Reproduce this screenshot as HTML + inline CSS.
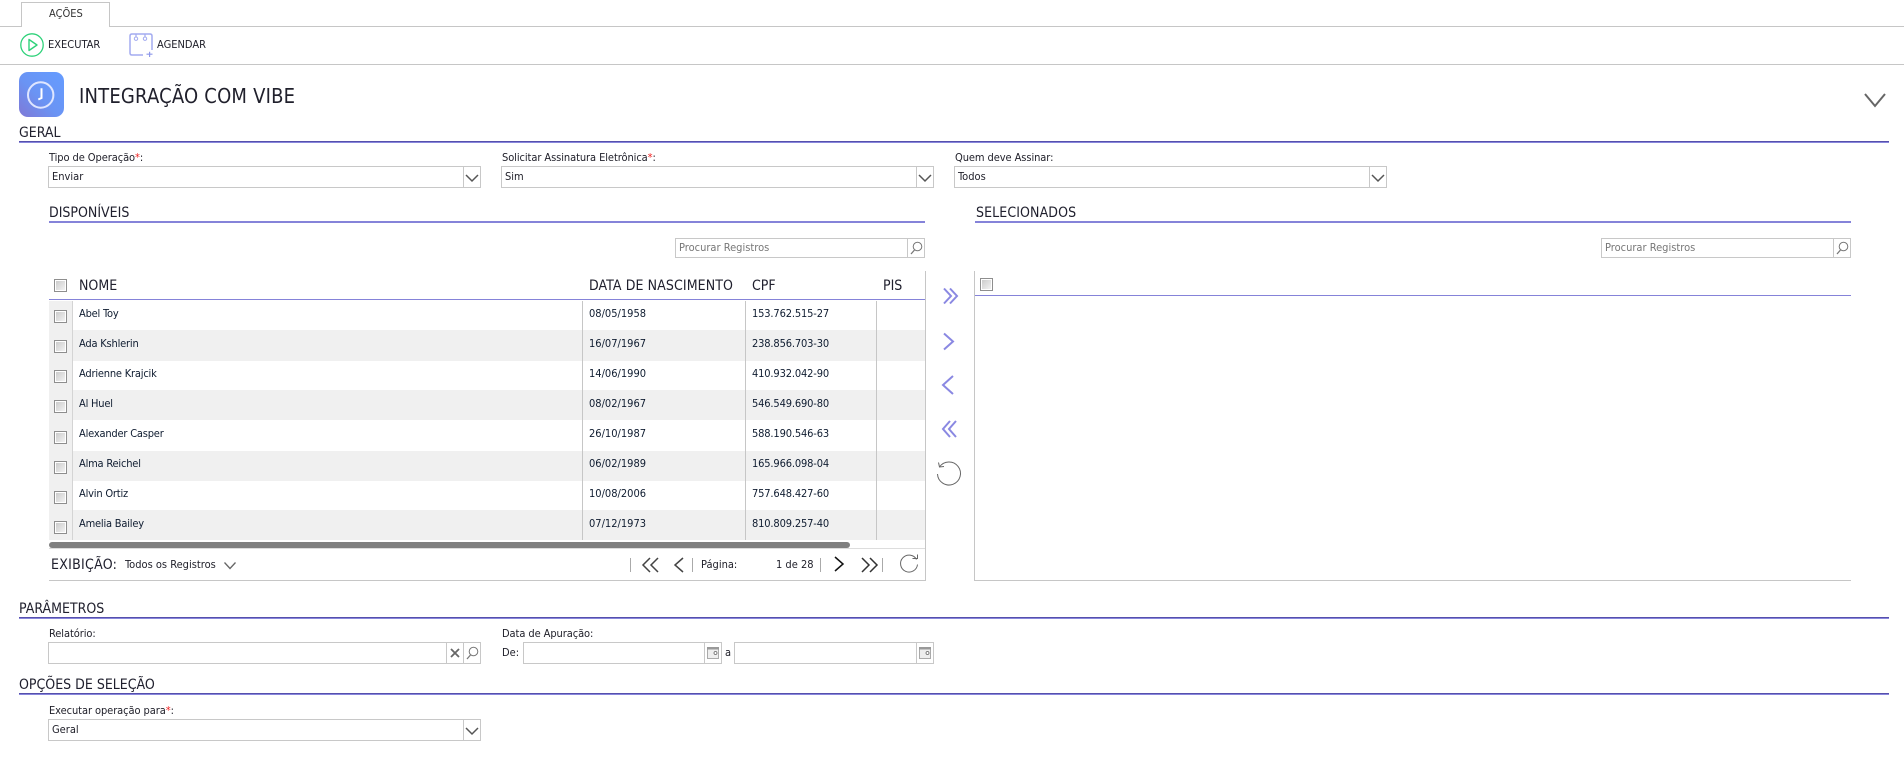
<!DOCTYPE html>
<html lang="pt-BR">
<head>
<meta charset="utf-8">
<title>Integração com Vibe</title>
<style>
html,body{margin:0;padding:0;background:#fff;width:1904px;height:759px;overflow:hidden}
body{position:relative;font-family:"DejaVu Sans Condensed","DejaVu Sans","Liberation Sans",sans-serif;font-stretch:condensed;font-size:11px;color:#1e1e28}
.t{position:absolute;white-space:nowrap;line-height:16px;height:16px}
.h{font-size:14px;color:#20202e}
.d{color:#0f1c30}
.n{letter-spacing:-.2px}
.c{letter-spacing:-.15px}
.l{letter-spacing:-.08px}
.r{color:#f02020}
.a{position:absolute}
.hl{position:absolute;height:2px;background:linear-gradient(#5650ac 50%,#8886dc 50%)}
.hl2{position:absolute;height:2px;background:#8583d9}
.hl1{position:absolute;height:1px;background:#8583d9}
.g{position:absolute;background:#c6c6c6}
.box{position:absolute;box-sizing:border-box;border:1px solid #c8c8c8;background:#fff}
.sep{position:absolute;top:0;bottom:0;width:1px;background:#c8c8c8}
.cb{position:absolute;box-sizing:border-box;width:13px;height:13px;border:1px solid #8e8e8e;background:linear-gradient(135deg,#c8c8c8,#f6f6f6);box-shadow:inset 0 0 0 1px #fff}
.row{position:absolute;left:49px;width:876px;height:29px}
.alt{background:#f0f0f0}
svg{position:absolute;overflow:visible}
</style>
</head>
<body>
<!-- Tabs -->
<div class="g" style="left:0;top:26px;width:1904px;height:1px"></div>
<div class="a" style="left:21px;top:2px;width:89px;height:25px;box-sizing:border-box;border:1px solid #c6c6c6;border-bottom:0;background:#fff"></div>
<div class="t" style="left:49px;top:6px;color:#333">AÇÕES</div>

<!-- Toolbar -->
<svg style="left:20px;top:33px" width="24" height="24" fill="none"><circle cx="12" cy="12" r="11.2" stroke="#2fd27a" stroke-width="1.3"/><path d="M9 6.5 L17 12 L9 17.5 Z" stroke="#2fd27a" stroke-width="1.4" stroke-linejoin="round"/></svg>
<div class="t" style="left:48px;top:37px">EXECUTAR</div>
<svg style="left:129px;top:33px" width="24" height="24" fill="none"><path d="M14 22H3Q1 22 1 20V3Q1 1 3 1H21Q23 1 23 3V17" stroke="#a3abf0" stroke-width="1.500"/><circle cx="7" cy="5.700" r="1.700" stroke="#a3abf0"/><circle cx="16" cy="5.700" r="1.700" stroke="#a3abf0"/><path d="M7 1V4M16 1V4" stroke="#a3abf0" stroke-width="1.200"/><path d="M17.500 21.200H23.500M20.600 18.700V24" stroke="#8f98ea" stroke-width="1.200"/></svg>
<div class="t" style="left:157px;top:37px">AGENDAR</div>
<div class="g" style="left:0;top:64px;width:1904px;height:1px"></div>

<!-- Page title -->
<div class="a" style="left:19px;top:72px;width:45px;height:45px;border-radius:9px;background:linear-gradient(45deg,#7f78d6 0%,#6a94f4 45%,#659cff 100%)"></div>
<svg style="left:19px;top:72px" width="45" height="45" fill="none"><circle cx="21.700" cy="23" r="12.700" stroke="#dfe6ff" stroke-width="2"/><path d="M22.500 16.300V26L19.300 27.500" stroke="#fff" stroke-width="2"/></svg>
<div class="t" style="left:79px;top:84px;font-size:20px;line-height:24px;height:24px;color:#20202c;letter-spacing:.2px">INTEGRAÇÃO COM VIBE</div>
<svg style="left:1864px;top:93px" width="22" height="15" fill="none"><path d="M1 1L11 13L21 1" stroke="#666" stroke-width="2"/></svg>

<!-- Geral -->
<div class="t h" style="left:19px;top:125px">GERAL</div>
<div class="hl" style="left:19px;top:141px;width:1870px"></div>

<div class="t l" style="left:49px;top:150px">Tipo de Operação<span class="r">*</span>:</div>
<div class="box" style="left:48px;top:166px;width:433px;height:22px"><div class="sep" style="right:16px"></div></div>
<svg style="left:465px;top:174px" width="14" height="8" fill="none"><path d="M1 1L7 7L13 1" stroke="#555" stroke-width="1.500"/></svg>
<div class="t" style="left:52px;top:169px">Enviar</div>

<div class="t l" style="left:502px;top:150px">Solicitar Assinatura Eletrônica<span class="r">*</span>:</div>
<div class="box" style="left:501px;top:166px;width:433px;height:22px"><div class="sep" style="right:16px"></div></div>
<svg style="left:918px;top:174px" width="14" height="8" fill="none"><path d="M1 1L7 7L13 1" stroke="#555" stroke-width="1.500"/></svg>
<div class="t" style="left:505px;top:169px">Sim</div>

<div class="t l" style="left:955px;top:150px">Quem deve Assinar:</div>
<div class="box" style="left:954px;top:166px;width:433px;height:22px"><div class="sep" style="right:16px"></div></div>
<svg style="left:1371px;top:174px" width="14" height="8" fill="none"><path d="M1 1L7 7L13 1" stroke="#555" stroke-width="1.500"/></svg>
<div class="t" style="left:958px;top:169px">Todos</div>

<!-- Disponíveis -->
<div class="t h" style="left:49px;top:205px">DISPONÍVEIS</div>
<div class="hl2" style="left:49px;top:221px;width:876px"></div>
<div class="t h" style="left:976px;top:205px;letter-spacing:.1px">SELECIONADOS</div>
<div class="hl2" style="left:975px;top:221px;width:876px"></div>

<!-- Search -->
<div class="box" style="left:675px;top:238px;width:250px;height:20px"><div class="sep" style="right:16px"></div></div>
<div class="t" style="left:679px;top:240px;color:#777">Procurar Registros</div>
<svg style="left:910px;top:241px" width="13" height="14" fill="none"><circle cx="7.500" cy="5.500" r="4.300" stroke="#777" stroke-width="1"/><path d="M4.500 9L1 13" stroke="#777" stroke-width="1.300"/></svg>
<div class="box" style="left:1601px;top:238px;width:250px;height:20px"><div class="sep" style="right:16px"></div></div>
<div class="t" style="left:1605px;top:240px;color:#777">Procurar Registros</div>
<svg style="left:1836px;top:241px" width="13" height="14" fill="none"><circle cx="7.500" cy="5.500" r="4.300" stroke="#777" stroke-width="1"/><path d="M4.500 9L1 13" stroke="#777" stroke-width="1.300"/></svg>

<!-- Table header -->
<div class="cb" style="left:54px;top:279px"></div>
<div class="t h" style="left:79px;top:278px">NOME</div>
<div class="t h" style="left:589px;top:278px;letter-spacing:.1px">DATA DE NASCIMENTO</div>
<div class="t h" style="left:752px;top:278px">CPF</div>
<div class="t h" style="left:883px;top:278px">PIS</div>
<div class="hl1" style="left:49px;top:299px;width:876px"></div>

<!-- Rows -->
<div class="row" style="top:301px"></div>
<div class="row alt" style="top:330px;height:31px"></div>
<div class="row" style="top:361px"></div>
<div class="row alt" style="top:390px;height:30px"></div>
<div class="row" style="top:420px;height:30px"></div>
<div class="row alt" style="top:451px;height:30px"></div>
<div class="row" style="top:481px"></div>
<div class="row alt" style="top:510px;height:30px"></div>
<div class="a" style="left:49px;top:301px;width:23px;height:239px;background:#f0f0f0"></div>
<div class="g" style="left:72px;top:301px;width:1px;height:239px;background:#d4d4d4"></div>
<div class="g" style="left:582px;top:301px;width:1px;height:239px"></div>
<div class="g" style="left:745px;top:301px;width:1px;height:239px"></div>
<div class="g" style="left:876px;top:301px;width:1px;height:239px"></div>

<div class="cb" style="left:54px;top:310px"></div>
<div class="cb" style="left:54px;top:340px"></div>
<div class="cb" style="left:54px;top:370px"></div>
<div class="cb" style="left:54px;top:400px"></div>
<div class="cb" style="left:54px;top:431px"></div>
<div class="cb" style="left:54px;top:461px"></div>
<div class="cb" style="left:54px;top:491px"></div>
<div class="cb" style="left:54px;top:521px"></div>

<div class="t d n" style="left:79px;top:306px">Abel Toy</div><div class="t d" style="left:589px;top:306px">08/05/1958</div><div class="t d c" style="left:752px;top:306px">153.762.515-27</div>
<div class="t d n" style="left:79px;top:336px">Ada Kshlerin</div><div class="t d" style="left:589px;top:336px">16/07/1967</div><div class="t d c" style="left:752px;top:336px">238.856.703-30</div>
<div class="t d n" style="left:79px;top:366px">Adrienne Krajcik</div><div class="t d" style="left:589px;top:366px">14/06/1990</div><div class="t d c" style="left:752px;top:366px">410.932.042-90</div>
<div class="t d n" style="left:79px;top:396px">Al Huel</div><div class="t d" style="left:589px;top:396px">08/02/1967</div><div class="t d c" style="left:752px;top:396px">546.549.690-80</div>
<div class="t d n" style="left:79px;top:426px">Alexander Casper</div><div class="t d" style="left:589px;top:426px">26/10/1987</div><div class="t d c" style="left:752px;top:426px">588.190.546-63</div>
<div class="t d n" style="left:79px;top:456px">Alma Reichel</div><div class="t d" style="left:589px;top:456px">06/02/1989</div><div class="t d c" style="left:752px;top:456px">165.966.098-04</div>
<div class="t d n" style="left:79px;top:486px">Alvin Ortiz</div><div class="t d" style="left:589px;top:486px">10/08/2006</div><div class="t d c" style="left:752px;top:486px">757.648.427-60</div>
<div class="t d n" style="left:79px;top:516px">Amelia Bailey</div><div class="t d" style="left:589px;top:516px">07/12/1973</div><div class="t d c" style="left:752px;top:516px">810.809.257-40</div>

<!-- Scrollbar -->
<div class="a" style="left:49px;top:542px;width:801px;height:6px;background:#808080;border-radius:3px"></div>
<div class="g" style="left:49px;top:548px;width:876px;height:1px;background:#ddd"></div>

<!-- Table borders -->
<div class="g" style="left:925px;top:271px;width:1px;height:310px"></div>
<div class="g" style="left:974px;top:271px;width:1px;height:310px"></div>
<div class="g" style="left:49px;top:580px;width:877px;height:1px"></div>
<div class="g" style="left:974px;top:580px;width:877px;height:1px"></div>

<!-- Footer -->
<div class="t h" style="left:51px;top:557px;letter-spacing:.27px">EXIBIÇÃO:</div>
<div class="t" style="left:125px;top:557px">Todos os Registros</div>
<svg style="left:224px;top:562px" width="12" height="8" fill="none"><path d="M0.500 0.500L6 6.500L11.500 0.500" stroke="#666" stroke-width="1.300"/></svg>
<div class="g" style="left:630px;top:558px;width:1px;height:14px;background:#aaa"></div>
<svg style="left:642px;top:557px" width="17" height="16" fill="none" stroke="#444" stroke-width="1.500"><path d="M8 1L1 8L8 15M16 1L9 8L16 15"/></svg>
<svg style="left:674px;top:557px" width="10" height="16" fill="none" stroke="#444" stroke-width="1.500"><path d="M9 1L1 8L9 15"/></svg>
<div class="g" style="left:692px;top:558px;width:1px;height:14px;background:#aaa"></div>
<div class="t" style="left:701px;top:557px">Página:</div>
<div class="t" style="left:776px;top:557px">1 de 28</div>
<div class="g" style="left:820px;top:558px;width:1px;height:14px;background:#aaa"></div>
<svg style="left:834px;top:556px" width="10" height="16" fill="none" stroke="#111" stroke-width="1.500"><path d="M1 1L9 8L1 15"/></svg>
<svg style="left:861px;top:557px" width="17" height="16" fill="none" stroke="#333" stroke-width="1.500"><path d="M1 1L8 8L1 15M9 1L16 8L9 15"/></svg>
<div class="g" style="left:882px;top:558px;width:1px;height:14px;background:#aaa"></div>
<svg style="left:899px;top:554px" width="20" height="20" fill="none" stroke="#666" stroke-width="1"><path d="M17.500 5.500A8.500 8.500 0 1 0 18.500 10.500"/><path d="M13.500 4.500H18.500V0.500"/></svg>

<!-- Transfer buttons -->
<svg style="left:942px;top:287px" width="17" height="18" fill="none" stroke="#8a88e2" stroke-width="2"><path d="M2 1.500L9 9L2 16.500M8 1.500L15 9L8 16.500"/></svg>
<svg style="left:942px;top:332px" width="14" height="19" fill="none" stroke="#8a88e2" stroke-width="2"><path d="M2 1.500L11 9.500L2 17.500"/></svg>
<svg style="left:941px;top:375px" width="14" height="20" fill="none" stroke="#8a88e2" stroke-width="2"><path d="M12 1L2 10L12 19"/></svg>
<svg style="left:941px;top:420px" width="17" height="18" fill="none" stroke="#8a88e2" stroke-width="2"><path d="M9 1L2 9L9 17M15 1L8 9L15 17"/></svg>
<svg style="left:936px;top:461px" width="26" height="26" fill="none" stroke="#666" stroke-width="1"><path d="M3.500 6A11.500 11.500 0 1 1 1.500 13"/><path d="M8 5.500L3.500 6L2.500 1.500"/></svg>

<!-- Selected panel header -->
<div class="cb" style="left:980px;top:278px"></div>
<div class="hl1" style="left:975px;top:295px;width:876px"></div>

<!-- Parâmetros -->
<div class="t h" style="left:19px;top:601px">PARÂMETROS</div>
<div class="hl" style="left:19px;top:617px;width:1870px"></div>
<div class="t l" style="left:49px;top:626px">Relatório:</div>
<div class="box" style="left:48px;top:642px;width:433px;height:22px"><div class="sep" style="right:16px"></div><div class="sep" style="right:33px"></div></div>
<svg style="left:450px;top:648px" width="10" height="10" fill="none" stroke="#666" stroke-width="1.800"><path d="M1 1L9 9M9 1L1 9"/></svg>
<svg style="left:466px;top:646px" width="13" height="14" fill="none"><circle cx="7.500" cy="5.500" r="4.300" stroke="#777" stroke-width="1"/><path d="M4.500 9L1 13" stroke="#777" stroke-width="1.300"/></svg>

<div class="t l" style="left:502px;top:626px">Data de Apuração:</div>
<div class="t" style="left:502px;top:645px">De:</div>
<div class="box" style="left:523px;top:642px;width:199px;height:22px"><div class="sep" style="right:16px"></div></div>
<svg style="left:707px;top:647px" width="12" height="12"><rect x="0.500" y="0.500" width="11" height="11" fill="#eee" stroke="#aaa"/><rect x="0" y="0" width="12" height="2.500" fill="#999"/><circle cx="8.500" cy="6" r="1.500" fill="#fff" stroke="#666" stroke-width="0.800"/></svg>
<div class="t" style="left:725px;top:645px">a</div>
<div class="box" style="left:734px;top:642px;width:200px;height:22px"><div class="sep" style="right:16px"></div></div>
<svg style="left:919px;top:647px" width="12" height="12"><rect x="0.500" y="0.500" width="11" height="11" fill="#eee" stroke="#aaa"/><rect x="0" y="0" width="12" height="2.500" fill="#999"/><circle cx="8.500" cy="6" r="1.500" fill="#fff" stroke="#666" stroke-width="0.800"/></svg>

<!-- Opções de seleção -->
<div class="t h" style="left:19px;top:677px">OPÇÕES DE SELEÇÃO</div>
<div class="hl" style="left:19px;top:693px;width:1870px"></div>
<div class="t l" style="left:49px;top:703px">Executar operação para<span class="r">*</span>:</div>
<div class="box" style="left:48px;top:719px;width:433px;height:22px"><div class="sep" style="right:16px"></div></div>
<svg style="left:465px;top:727px" width="14" height="8" fill="none"><path d="M1 1L7 7L13 1" stroke="#555" stroke-width="1.500"/></svg>
<div class="t" style="left:52px;top:722px">Geral</div>
</body>
</html>
